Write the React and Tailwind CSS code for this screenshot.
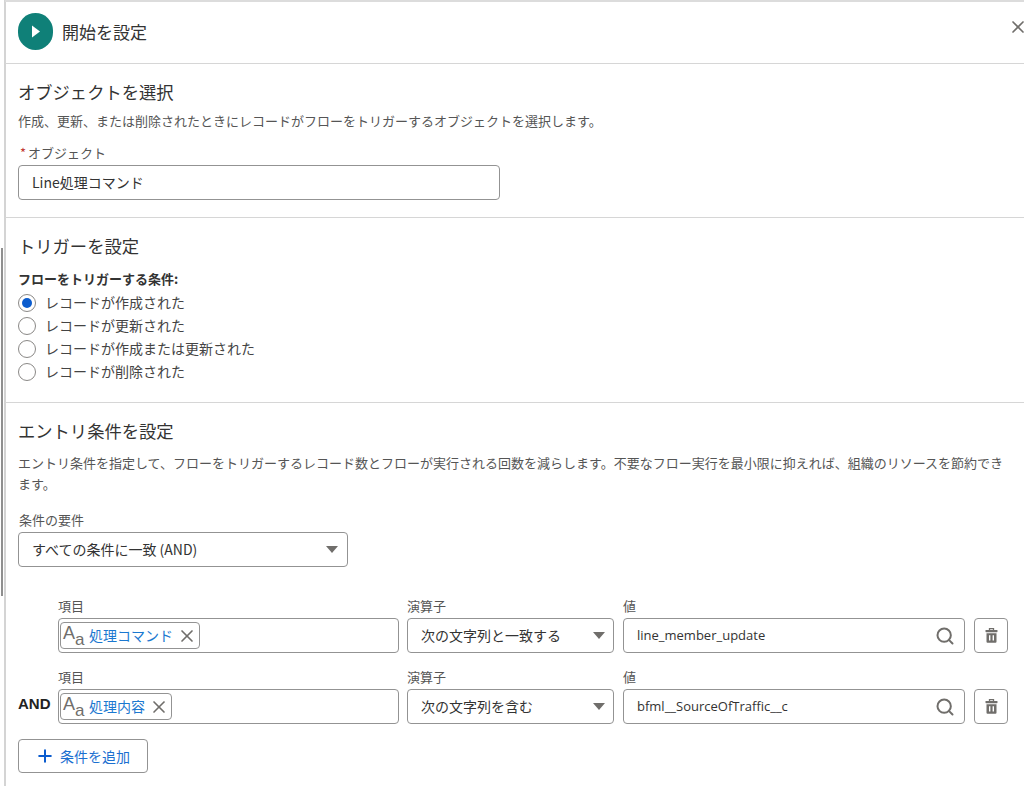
import React from "react";
import { Search, X, Plus } from "lucide-react";

const font = { fontFamily: '"Noto Sans CJK JP", "Liberation Sans", sans-serif' };

const Caret = () => (
  <svg width="12" height="7" viewBox="0 0 12 7" className="shrink-0">
    <path d="M0 0h12L6 7z" fill="#706e6b" />
  </svg>
);

const TrashIcon = () => (
  <svg width="13" height="15" viewBox="0 0 13 15">
    <path d="M4.5 2V.7h4V2" fill="none" stroke="#706e6b" strokeWidth="1.3" />
    <rect x="0.5" y="2" width="12" height="2.2" rx="0.6" fill="#706e6b" />
    <path fillRule="evenodd" d="M1.5 5.2h10v8.6a1 1 0 0 1-1 1h-8a1 1 0 0 1-1-1zM4 7.2v5.4h1.4V7.2zM7.6 7.2v5.4H9V7.2z" fill="#706e6b" />
  </svg>
);

const Radio = ({ label, checked }) => (
  <div className="flex items-center h-[23px]">
    <span className="w-[18px] h-[18px] rounded-full border border-[#8a8886] bg-white flex items-center justify-center shrink-0">
      {checked && <span className="w-[10px] h-[10px] rounded-full bg-[#0b5cce]" />}
    </span>
    <span className="ml-[9px] text-[14px] text-[#444]">{label}</span>
  </div>
);

const SelectBox = ({ label, width, pad }) => (
  <div className={`${width} h-[35px] border border-[#939393] rounded-[4px] bg-white flex items-center justify-between ${pad}`}>
    <span className="text-[14px] text-[#333] whitespace-nowrap">{label}</span>
    <Caret />
  </div>
);

const AaIcon = () => (
  <span className="w-[23px] h-[24px] flex items-start text-[#706e6b] leading-none shrink-0" style={{ fontFamily: '"Liberation Sans", sans-serif' }}>
    <span className="text-[18px]">A</span>
    <span className="text-[17px] mt-[7px]">a</span>
  </span>
);

const ConditionRow = ({ prefix, field, chipWidth, operator, value }) => (
  <div className="flex items-end">
    <div className="w-[40px] h-[35px] pb-[4px] flex items-center text-[15px] font-bold text-[#222]" style={{ fontFamily: '"Liberation Sans", sans-serif' }}>{prefix}</div>
    <div className="w-[341px] mr-[8px]">
      <div className="text-[13px] leading-[18px] mb-[3px] text-[#555]">項目</div>
      <div className="h-[35px] border border-[#939393] rounded-[4px] flex items-center pl-[1px]">
        <div className={`${chipWidth} h-[27px] border border-[#939393] rounded-[4px] flex items-center pl-[2px]`}>
          <AaIcon />
          <span className="ml-[3px] text-[14px] text-[#1b78d0] whitespace-nowrap">{field}</span>
          <X size={20} strokeWidth={2} className="ml-auto mr-[2px] text-[#706e6b]" />
        </div>
      </div>
    </div>
    <div className="w-[207px] mr-[9px]">
      <div className="text-[13px] leading-[18px] mb-[3px] text-[#555]">演算子</div>
      <SelectBox label={operator} width="w-[207px]" pad="pl-[13px] pr-[8px]" />
    </div>
    <div className="w-[342px] mr-[9px]">
      <div className="text-[13px] leading-[18px] mb-[3px] text-[#555]">値</div>
      <div className="h-[35px] border border-[#939393] rounded-[4px] flex items-center justify-between pl-[13px] pr-[9px]">
        <span className="text-[13px] text-[#333]" style={{ fontFamily: '"Open Sans", sans-serif' }}>{value}</span>
        <Search size={20} strokeWidth={2.4} className="text-[#706e6b]" />
      </div>
    </div>
    <div className="w-[34px] h-[35px] border border-[#939393] rounded-[4px] flex items-center justify-center">
      <TrashIcon />
    </div>
  </div>
);

export default function App() {
  return (
    <div className="w-[1024px] h-[786px] overflow-hidden bg-white flex" style={font}>
      <div className="w-[6px] h-full border-r-2 border-[#d4d4d4] shrink-0">
        <div className="mt-[248px] ml-[1px] w-[2px] h-[348px] bg-[#8f8f8f]" />
      </div>
      <div className="flex-1 min-w-0 border-t-2 border-[#dcdcdc] -ml-[1px]">
        {/* header */}
        <div className="h-[62px] border-b border-[#d6d6d6] flex items-center pl-[13px] pb-[2px]">
          <div className="w-[35px] h-[37px] rounded-full bg-[#0f8078] flex items-center justify-center">
            <svg width="10" height="13" viewBox="0 0 10 13">
              <path d="M1 .5l8 6-8 6z" fill="#fff" />
            </svg>
          </div>
          <h1 className="ml-[9px] text-[17px] text-[#333]">開始を設定</h1>
          <X size={20} strokeWidth={2} className="ml-auto text-[#706e6b] -mt-[9px] -mr-[4px]" />
        </div>

        {/* object */}
        <div className="h-[154px] border-b border-[#d6d6d6] pl-[13px] pt-[16px]">
          <h2 className="text-[17.3px] leading-[24px] text-[#333]">オブジェクトを選択</h2>
          <p className="mt-[8px] text-[13px] leading-[18px] text-[#555]">
            作成、更新、または削除されたときにレコードがフローをトリガーするオブジェクトを選択します。
          </p>
          <div className="mt-[14px] text-[13px] leading-[18px] text-[#555] pl-[2px]">
            <span className="text-[#c23934]">*</span>
            <span className="ml-[2px]">オブジェクト</span>
          </div>
          <div className="mt-[3px] w-[482px] h-[35px] border border-[#939393] rounded-[4px] flex items-center pl-[13px] text-[14px] text-[#333]">
            Line処理コマンド
          </div>
        </div>

        {/* trigger */}
        <div className="h-[185px] border-b border-[#d6d6d6] pl-[13px] pt-[16px]">
          <h2 className="text-[17.3px] leading-[24px] text-[#333]">トリガーを設定</h2>
          <div className="mt-[12px] text-[13px] leading-[18px] font-bold text-[#333]">フローをトリガーする条件:</div>
          <div className="mt-[3px]">
            <Radio label="レコードが作成された" checked />
            <Radio label="レコードが更新された" />
            <Radio label="レコードが作成または更新された" />
            <Radio label="レコードが削除された" />
          </div>
        </div>

        {/* entry conditions */}
        <div className="pl-[13px] pt-[16px]">
          <h2 className="text-[17.3px] leading-[24px] text-[#333]">エントリ条件を設定</h2>
          <p className="mt-[9px] w-[992px] text-[13px] leading-[21px] text-[#555]">
            エントリ条件を指定して、フローをトリガーするレコード数とフローが実行される回数を減らします。不要なフロー実行を最小限に抑えれば、組織のリソースを節約できます。
          </p>
          <div className="mt-[17px] pl-[1px] text-[13px] leading-[18px] text-[#555]">条件の要件</div>
          <div className="mt-[3px]">
            <SelectBox label="すべての条件に一致 (AND)" width="w-[330px]" pad="pl-[13px] pr-[9px]" />
          </div>
          <div className="mt-[30px] flex flex-col gap-[15px]">
            <ConditionRow field="処理コマンド" chipWidth="w-[140px]" operator="次の文字列と一致する" value="line_member_update" />
            <ConditionRow prefix="AND" field="処理内容" chipWidth="w-[112px]" operator="次の文字列を含む" value="bfml__SourceOfTraffic__c" />
          </div>
          <button className="mt-[15px] w-[130px] h-[34px] border border-[#939393] rounded-[4px] flex items-center pl-[16px] text-[14px] text-[#1b6fd0]">
            <Plus size={20} strokeWidth={2.4} className="text-[#0b5cce]" />
            <span className="ml-[5px]">条件を追加</span>
          </button>
        </div>
      </div>
    </div>
  );
}
